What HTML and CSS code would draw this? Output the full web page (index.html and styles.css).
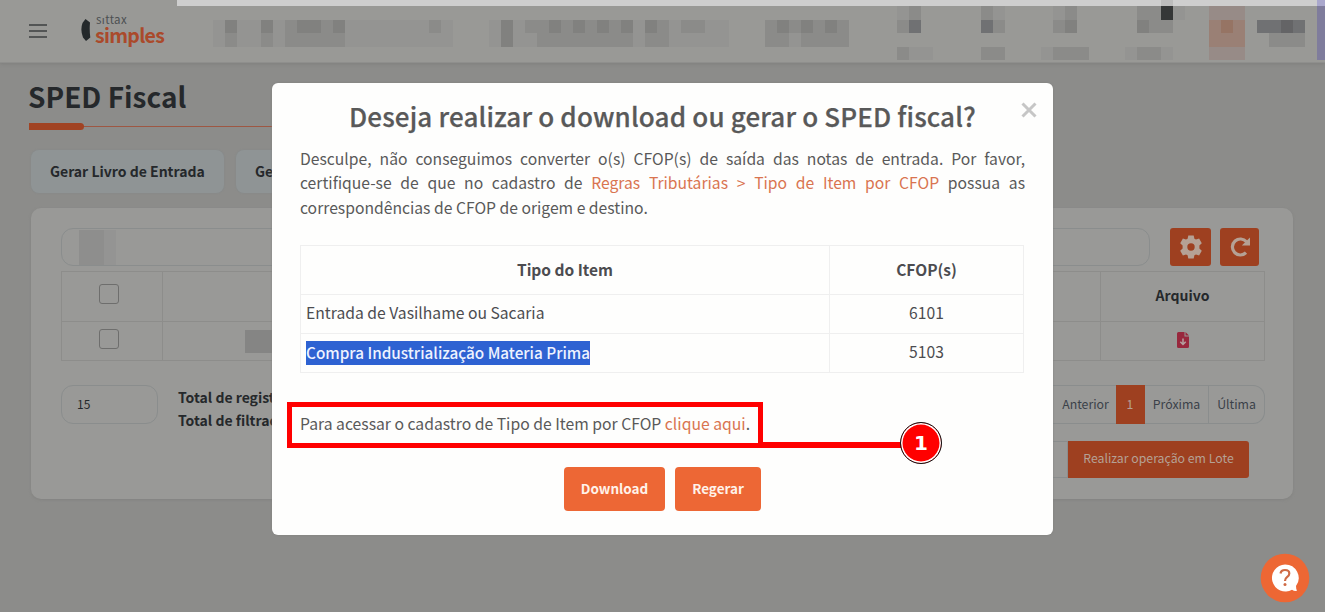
FILE: index.html
```html
<!DOCTYPE html>
<html lang="pt-BR">
<head>
<meta charset="utf-8">
<title>SPED Fiscal</title>
<link rel="stylesheet" href="styles.css">
</head>
<body>
<div class="screen">
  <header class="topbar">
    <svg class="menu" width="18" height="16" viewBox="0 0 18 16"><path d="M0 2H18M0 8H18M0 14H18" stroke="#3c3f40" stroke-width="1.7"/></svg>
    <div class="logo">
      <svg width="11" height="24" viewBox="0 0 11 24"><path d="M4.500 1L9 4.500Q8.300 12 9.300 19.500L5 23L2 19.500Q-1 12 1.500 5Z" fill="#24292b"/></svg>
      <div class="logo-text"><span class="brand">sıttax</span><span class="product">simples</span></div>
    </div>
    <svg class="pixels" width="1125" height="62" viewBox="200 0 1125 62" shape-rendering="crispEdges">
      <g fill="#949492">
        <path d="M213 20h240v27H213zM489 20h240v27H489zM765 20h84v27h-84zM897 47h36v13h-36zM981 47h24v13h-24zM1041 47h48v13h-48zM1125 47h48v13h-48zM897 6h12v14h-12zM981 6h24v14h-24zM1053 6h12v14h-12zM1137 6h48v14h-48z"/>
      </g>
      <g fill="#8b8b89">
        <path d="M225 33h12v14h-12zM261 33h12v14h-12zM285 33h60v14h-60zM285 20h12v13h-12zM321 20h12v13h-12zM429 20h12v13h-12zM525 20h108v13H525zM537 33h96v14h-96zM645 33h24v14h-24zM657 20h12v13h-12zM681 20h24v13h-24zM765 20h84v13h-84zM765 33h24v14h-24zM801 33h48v14h-48zM1269 33h36v14h-36z"/>
        <path d="M909 6h12v14h-12zM981 6h12v14h-12zM1065 6h12v14h-12zM1137 6h24v14h-24zM897 20h12v13h-12zM993 20h12v13h-12zM1053 20h12v13h-12zM1149 20h24v13h-24zM897 47h12v13h-12zM981 47h24v13h-24zM1053 47h36v13h-36zM1137 47h24v13h-24z"/>
      </g>
      <g fill="#81817f">
        <path d="M225 20h12v13h-12zM261 20h12v13h-12zM297 20h24v13h-24zM333 20h12v13h-12zM501 20h12v27h-12zM549 20h12v13h-12zM573 20h12v13h-12zM597 20h12v13h-12zM621 20h12v13h-12zM645 20h12v13h-12zM777 20h12v13h-12zM801 20h12v13h-12zM825 20h12v13h-12zM1065 20h12v13h-12zM1137 20h12v13h-12z"/>
      </g>
      <path d="M909 20h12v13h-12zM981 20h12v13h-12zM1257 20h48v13h-48z" fill="#707173"/>
      <path d="M1281 20h12v13h-12z" fill="#646466"/>
      <path d="M1209 6h36v14h-36zM1209 47h36v13h-36z" fill="#978b87"/>
      <path d="M1209 20h36v27h-36z" fill="#9a8075"/>
      <path d="M1221 20h12v13h-12z" fill="#967464"/>
      <path d="M1317 6h8v54h-8z" fill="#7f7c9c"/>
    </svg>
    <svg class="topstrip" width="1148" height="20" viewBox="177 0 1148 20" shape-rendering="crispEdges">
      <path d="M177 0h1148v6H177z" fill="#cecece"/><path d="M1161 0h12v6h-12z" fill="#bcbcbc"/><path d="M1161 6h12v14h-12z" fill="#353737"/><path d="M1317 0h8v6h-8z" fill="#aaa8cd"/>
    </svg>
  </header>

  <main class="page">
    <h1 class="page-title">SPED Fiscal</h1>
    <div class="rule"><span class="rule-mark"></span></div>
    <div class="actions"><button class="tab">Gerar Livro de Entrada</button><button class="tab">Gerar</button></div>

    <section class="card">
      <div class="toolbar">
        <div class="search"><span class="mask"></span><span class="mask light"></span></div>
        <div class="icon-btn gear"><svg width="24" height="24" viewBox="0 0 24 24"><path fill="#b5a195" fill-rule="evenodd" d="M9.300.5h5.400l.7 3.200 1.600.9 3.100-1 2.700 4.600-2.400 2.200v3.200l2.400 2.200-2.700 4.600-3.100-1-1.600.9-.7 3.200H9.300l-.7-3.200-1.600-.9-3.100 1-2.700-4.600 2.400-2.200v-3.200L1.200 8.200l2.700-4.600 3.100 1 1.600-.9zM12 8.300a3.700 3.700 0 1 0 0 7.400 3.700 3.700 0 0 0 0-7.400"/></svg></div>
        <div class="icon-btn"><svg width="22" height="22" viewBox="0 0 22 22"><path d="M17.500 5.800A8 8 0 1 0 17 16.700" fill="none" stroke="#b5a195" stroke-width="3.200"/><path d="M21 1.500V9.500H12.800Z" fill="#b5a195"/></svg></div>
      </div>
      <div class="grid">
        <div class="cell"><i class="check"></i></div><div class="cell"></div><div class="cell head">Arquivo</div>
        <div class="cell"><i class="check"></i></div><div class="cell masked"><span class="mask small"></span></div>
        <div class="cell file"><svg width="12" height="16" viewBox="0 0 12 16"><path d="M1.500 0H7.500V4.500H12V14.500Q12 16 10.500 16H1.500Q0 16 0 14.500V1.500Q0 0 1.500 0ZM8.500 0L12 3.500H8.500Z" fill="#98283d"/><path d="M6 6.500V12M3.300 9.700L6 12.500L8.700 9.700" fill="none" stroke="#b5a0a0" stroke-width="1.500"/></svg></div>
      </div>
      <div class="footer">
        <div class="size">15</div>
        <div class="totals"><div>Total de registros</div><div>Total de filtrados</div></div>
        <div class="pager"><span class="prev">Anterior</span><span class="current">1</span><span class="next">Próxima</span><span class="last">Última</span></div>
      </div>
      <div class="batch"><div class="select"></div><button class="batch-btn">Realizar operação em Lote</button></div>
    </section>
  </main>

  <div class="modal">
    <svg class="close" width="16" height="16" viewBox="0 0 16 16"><path d="M1.500 1.500L14.500 14.500M14.500 1.500L1.500 14.500" stroke="#c6c6c6" stroke-width="3"/></svg>
    <h2 class="modal-title">Deseja realizar o download ou gerar o SPED fiscal?</h2>
    <p class="message">Desculpe, não conseguimos converter o(s) CFOP(s) de saída das notas de entrada. Por favor, certifique-se de que no cadastro de <a>Regras Tributárias &gt; Tipo de Item por CFOP</a> possua as correspondências de CFOP de origem e destino.</p>
    <div class="table">
      <div class="th">Tipo do Item</div><div class="th">CFOP(s)</div>
      <div class="td">Entrada de Vasilhame ou Sacaria</div><div class="td num">6101</div>
      <div class="td"><span class="selected">Compra Industrialização Materia Prima</span></div><div class="td num">5103</div>
    </div>
    <p class="hint">Para acessar o cadastro de Tipo de Item por CFOP <a>clique aqui</a>.</p>
    <div class="buttons"><button class="btn download">Download</button><button class="btn regen">Regerar</button></div>
  </div>

  <div class="callout-box"></div>
  <div class="callout-line"></div>
  <div class="callout-badge">1</div>

  <svg class="help" width="50" height="50" viewBox="0 0 50 50"><circle cx="25" cy="25" r="24.300" fill="#ed6734"/><path d="M25 11.500A13.500 13.500 0 1 0 32 36.800Q35 38.800 37 37.500Q36 36 36 33A13.500 13.500 0 0 0 25 11.500Z" fill="#fff"/><path d="M20.500 20.500Q21 17 25 17Q29.300 17 29.300 20.500Q29.300 22.500 27 24.200Q25 25.700 25 28" fill="none" stroke="#cf6a45" stroke-width="2.200"/><circle cx="25" cy="31.500" r="1.500" fill="#cf6a45"/></svg>
</div>
</body>
</html>
```
FILE: styles.css
```css
* { box-sizing: border-box; }
body { margin: 0; font-family: "Noto Sans CJK SC", "Noto Sans", sans-serif; }
button { font-family: inherit; border: 0; padding: 0; white-space: nowrap; }
h1, h2, p { margin: 0; }
.screen { position: relative; width: 1325px; height: 612px; overflow: hidden; background: #8c8c8a; color: #25282b; }

.topbar { position: relative; display: flex; align-items: center; height: 63px; padding-left: 29px; background: #999996; border-bottom: 1px solid #8f8f8d; box-shadow: 0 1px 3px #7f7f7d; }
.menu { margin-right: 34px; }
.logo { display: flex; gap: 3px; width: 119px; align-items: center; }
.logo > svg { margin-top: -3px; }
.logo-text { display: flex; flex-direction: column; margin-top: -5px; }
.brand { font-size: 11.500px; line-height: 12px; letter-spacing: .4px; padding-left: 1px; color: #4c5052; }
.product { font-size: 19.500px; line-height: 20px; font-weight: 700; color: #aa4a2b; letter-spacing: -.7px; }
.topstrip { position: absolute; top: 0; left: 177px; }

.page { padding: 17px 32px 0 28px; }
.page-title { font-size: 28px; line-height: 32px; font-weight: 700; }
.rule { height: 7px; margin: 11px 0 20px 1px; background: linear-gradient(#9e5743, #9e5743) 0 3px / 60% 1px no-repeat; }
.rule-mark { display: block; width: 55px; height: 7px; background: #a14323; border-radius: 0 4px 4px 0; }
.actions { display: flex; gap: 12px; padding-left: 3px; }
.tab { width: 193px; height: 43px; padding: 0 0 2px 19px; border-radius: 8px; background: #8f9495; box-shadow: 0 0 2px #818789; color: #25282b; font-size: 14px; font-weight: 700; text-align: left; }

.card { height: 291px; margin: 15px 0 0 3px; padding: 20px 28px 0 30px; border-radius: 10px; background: #999997; box-shadow: 0 1px 3px #838381; }
.toolbar { display: flex; height: 38px; padding-right: 6px; }
.search { flex: 1; display: flex; padding: 1px 17px; margin-right: 20px; border: 1px solid #8a8d8d; border-radius: 12px; }
.mask { width: 25px; height: 35px; background: #8e8e8d; }
.mask.light { width: 12px; background: #949493; }
.mask.small { width: 28px; height: 23px; background: #858584; }
.icon-btn { display: flex; align-items: center; justify-content: center; width: 39px; border-radius: 3px; background: #9e4020; }
.icon-btn.gear { width: 41px; margin-right: 9px; }
.grid { display: grid; grid-template-columns: 101px 1fr 164px; grid-template-rows: 50px 39px; margin-top: 5px; border: solid #8d8d8b; border-width: 1px 0 0 1px; }
.cell { display: flex; align-items: center; justify-content: center; border: solid #8d8d8b; border-width: 0 1px 1px 0; }
.cell .check { width: 20px; height: 20px; margin-top: -5px; margin-right: 6px; border: 1px solid #6e6e6d; border-radius: 3px; }
.cell.head { padding-bottom: 3px; font-size: 14px; font-weight: 700; }
.cell.masked { justify-content: flex-start; padding-left: 82px; }
.cell.file { padding-bottom: 2px; }
.footer { display: flex; height: 39px; margin-top: 24px; }
.size { width: 97px; padding-left: 15px; border: 1px solid #8a8d8d; border-radius: 12px; font-size: 12px; line-height: 36px; }
.totals { flex: 1; padding-left: 20px; font-size: 14px; font-weight: 700; line-height: 24px; }
.totals div { margin-top: -.5px; }
.pager { display: flex; font-size: 12.300px; line-height: 36px; color: #3b4149; text-align: center; }
.pager span { border: solid #8a8d8d; border-width: 1px 1px 1px 0; }
.pager .prev { width: 67px; padding-left: 6px; border-right: 0; }
.pager .current { width: 29px; background: #9e4020; border-color: #9e4020; color: #b5a195; }
.pager .next { width: 64px; }
.pager .last { width: 56px; border-radius: 0 12px 12px 0; }
.batch { display: flex; justify-content: flex-end; height: 37px; margin: 17px 16px 0 0; }
.select { width: 200px; border: 1px solid #8a8d8d; }
.batch-btn { width: 181px; padding-bottom: 3px; border-radius: 0 3px 3px 0; background: #9e4020; color: #b5a195; font-size: 12.300px; }

.modal { position: absolute; left: 272px; top: 83px; width: 781px; height: 452px; padding: 16px 28px; border-radius: 6px; background: #fefefd; box-shadow: 0 0 2px #7e7e7c; color: #595959; }
.close { position: absolute; left: 749px; top: 19px; }
.modal-title { text-align: center; font-size: 26px; line-height: 34px; font-weight: 500; letter-spacing: .15px; -webkit-text-stroke: .25px #595959; white-space: nowrap; }
.message { margin-top: 14px; font-size: 15.700px; line-height: 24.400px; text-align: justify; }
.modal a { color: #d97450; }
.table { display: grid; grid-template-columns: 529px 194px; grid-template-rows: 49px 39px 39px; width: 724px; margin: 25px 0 0; border: solid #efefef; border-width: 1px 0 0 1px; }
.th, .td { display: flex; align-items: center; border: solid #efefef; border-width: 0 1px 1px 0; padding-bottom: 3px; color: #4c4c50; }
.th { justify-content: center; font-size: 15.500px; font-weight: 700; }
.td { padding-left: 5px; font-size: 15.700px; }
.td.num { justify-content: center; padding-left: 0; }
.selected { background: #2e62d2; color: #eef3ff; font-size: 15.300px; line-height: 22px; padding-bottom: 2px; font-weight: 500; margin-bottom: -2px; }
.hint { margin-top: 38px; font-size: 15.720px; line-height: 26px; white-space: nowrap; }
.buttons { display: flex; justify-content: center; gap: 10px; margin-top: 30px; }
.btn { height: 44px; padding-bottom: 3px; border-radius: 4px; background: #ed6735; color: #fff2e9; font-size: 13.500px; font-weight: 700; }
.download { width: 101px; }
.regen { width: 86px; }

.callout-box { position: absolute; left: 287px; top: 402px; width: 476px; height: 46px; border: 5px solid #f00; }
.callout-line { position: absolute; left: 760px; top: 442px; width: 142px; height: 6px; background: #f00; }
.callout-badge { position: absolute; left: 900px; top: 422px; width: 42px; height: 42px; border: 1px solid #111; border-radius: 50%; background: #f00; box-shadow: inset 0 0 0 1.500px #fff; color: #fff; font: 700 20px/40px "DejaVu Sans", sans-serif; text-align: center; }
.help { position: absolute; left: 1260px; top: 553px; }
```
